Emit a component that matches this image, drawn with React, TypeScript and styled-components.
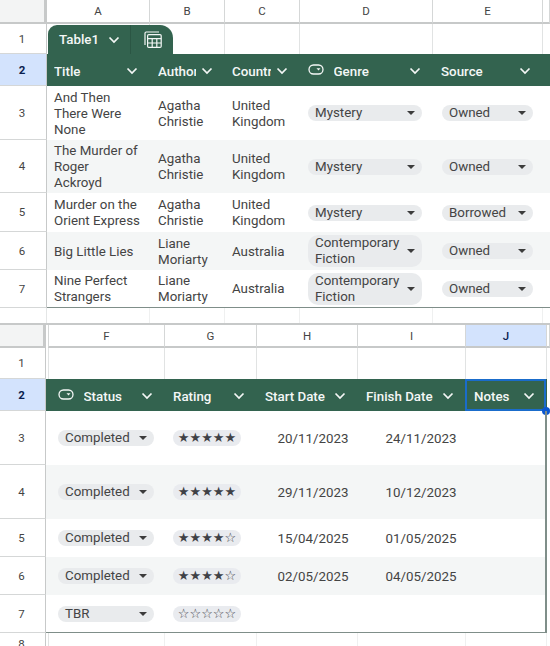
import React from "react"
import styled, {createGlobalStyle} from "styled-components"

const GREEN = "#33634f"
const LINE = "#e1e3e3"
const HEAD_LINE = "#c7c9c9"
const EDGE = "#7f8e89"
const INK = "#444"

const Global = createGlobalStyle`
  html, body {
    margin: 0;
    width: 550px;
    height: 646px;
    overflow: hidden;
    background: #fff;
    font-family: Roboto, "Liberation Sans", sans-serif;
  }
`

const Sheet = styled.div<{$cols: string; $rows: string; $top?: boolean}>`
  position: relative;
  display: grid;
  grid-template-columns: ${(p) => p.$cols};
  grid-template-rows: ${(p) => p.$rows};
  border-top: ${(p) => (p.$top ? `2px solid ${HEAD_LINE}` : "none")};
`

const Row = styled.div<{$band?: boolean; $last?: boolean}>`
  display: contents;

  & > * {
    min-width: 0;
    overflow: hidden;
  }

  & > .body {
    background: ${(p) => (p.$band ? "#f4f6f6" : "#fff")};
    border-bottom: ${(p) => (p.$last ? `1.5px solid ${EDGE}` : "none")};
  }
`

const Corner = styled.div`
  background: #f3f4f4;
  border-right: 3px solid ${HEAD_LINE};
  border-bottom: 2px solid ${HEAD_LINE};
`

const ColHead = styled.div<{$active?: boolean; $lead?: boolean}>`
  display: flex;
  align-items: center;
  justify-content: center;
  font-size: 11.5px;
  color: ${(p) => (p.$active ? "#0b1f50" : "#444")};
  font-weight: ${(p) => (p.$active ? 500 : 400)};
  background: ${(p) => (p.$active ? "#d3e3fd" : "#fff")};
  border-right: 1px solid #d5d7d7;
  border-bottom: 2px solid ${HEAD_LINE};
  border-left: ${(p) => (p.$lead ? "1px solid #d5d7d7" : "none")};
  margin-left: ${(p) => (p.$lead ? "2px" : "0")};
`

const RowHead = styled.div<{$active?: boolean}>`
  display: flex;
  align-items: center;
  justify-content: center;
  padding-right: 2px;
  font-size: 11.5px;
  color: ${(p) => (p.$active ? "#0b1f50" : "#444")};
  font-weight: ${(p) => (p.$active ? 700 : 400)};
  background: ${(p) => (p.$active ? "#d3e3fd" : "#fff")};
  border-right: 1px solid ${HEAD_LINE};
  border-bottom: 1px solid #d5d7d7;
`

const GutterGap = styled.div`
  border-right: 1px solid #e4e6e6;
`

const Blank = styled.div<{$lead?: boolean; $faint?: boolean}>`
  border-right: 1px solid ${(p) => (p.$faint ? "#eff0f0" : LINE)};
  border-left: ${(p) => (p.$lead ? `1px solid ${LINE}` : "none")};
  margin-left: ${(p) => (p.$lead ? "2px" : "0")};
`

const HeadCell = styled.div<{$pad: number}>`
  display: flex;
  align-items: center;
  padding: 2px 12px 0 ${(p) => p.$pad}px;
  background: ${GREEN};
  color: #f4f7f6;
  font-size: 13.33px;
  font-weight: 500;
  white-space: nowrap;
`

const HeadLabel = styled.span`
  flex: 1;
  min-width: 0;
  overflow: hidden;
  margin-right: 5px;
`

const PillIcon = styled.svg`
  flex: none;
  width: 16px;
  height: 11px;
  margin-right: 9.5px;
  margin-top: -3px;
`

const Chevron = styled.svg`
  flex: none;
  width: 12px;
  height: 8px;
`

const TextCell = styled.div<{$pad: number}>`
  display: flex;
  align-items: center;
  padding: 1px 7px 0 ${(p) => p.$pad}px;
  font-size: 13.33px;
  line-height: 16px;
  color: ${INK};
  white-space: pre-line;
`

const DateCell = styled.div`
  display: flex;
  align-items: center;
  justify-content: flex-end;
  padding-right: 9.5px;
  font-size: 13.33px;
  color: ${INK};
`

const ChipCell = styled.div<{$pad: number; $end: number}>`
  display: flex;
  align-items: center;
  padding: 0 ${(p) => p.$end}px 0 ${(p) => p.$pad}px;
`

const Chip = styled.div<{$tall?: boolean}>`
  flex: 1;
  min-width: 0;
  display: flex;
  align-items: center;
  gap: 4px;
  min-height: 16px;
  padding: 0 7px;
  border-radius: ${(p) => (p.$tall ? "10px" : "8px")};
  background: #e9ebed;
  font-size: 13.33px;
  line-height: 16px;
  color: ${INK};
`

const ChipText = styled.span`
  flex: 1;
  min-width: 0;
`

const Caret = styled.span`
  flex: none;
  width: 0;
  height: 0;
  border-left: 4px solid transparent;
  border-right: 4px solid transparent;
  border-top: 4px solid #3c3c3c;
`

const Stars = styled.div`
  flex: 1;
  display: flex;
  justify-content: center;
  height: 16px;
  border-radius: 8px;
  background: #e9ebef;
  font-family: "DejaVu Sans", sans-serif;
  font-size: 13px;
  line-height: 16px;
  color: #3f4146;
`

const Tab = styled.div`
  position: absolute;
  top: 25px;
  left: 48px;
  width: 125px;
  height: 29px;
  display: flex;
  align-items: center;
  background: ${GREEN};
  border-radius: 9px 13px 0 0;
  color: #f4f7f6;
  font-size: 13.33px;
  font-weight: 500;
`

const TabName = styled.div`
  display: flex;
  align-items: center;
  justify-content: space-between;
  width: 83px;
  height: 100%;
  padding: 0 10px 0 11px;
  box-sizing: border-box;
  border-right: 1px solid #2b5644;
`

const TabIcon = styled.svg`
  width: 18px;
  height: 17px;
  margin-left: 13px;
`

const Selection = styled.div`
  position: absolute;
  left: 465px;
  top: 54px;
  width: 81px;
  height: 32px;
  box-sizing: border-box;
  border: 2px solid #1a6ccb;
`

const Handle = styled.div`
  position: absolute;
  left: 542px;
  top: 82px;
  width: 8px;
  height: 8px;
  border-radius: 50%;
  background: #0b57d0;
`

const TableEdge = styled.div`
  position: absolute;
  left: 545px;
  top: 86px;
  width: 1.5px;
  height: 222px;
  background: ${EDGE};
`

const chevron = (
  <Chevron viewBox="0 0 12 8">
    <path d="M1.5 1.5 6 6l4.5-4.5" fill="none" stroke="#f4f7f6" strokeWidth="1.7" />
  </Chevron>
)

const pill = (
  <PillIcon viewBox="0 0 16 11">
    <rect x="1" y="1" width="14" height="9" rx="4.5" fill="none" stroke="#f4f7f6" strokeWidth="1.3" />
    <path d="M8.5 4.2h4L10.5 6.4z" fill="#f4f7f6" />
  </PillIcon>
)

type Value = {text: string} | {chip: string; tall?: boolean} | {stars: string} | {date: string}

type Col = {name: string; width: number; label: string; pad: number; chipPad?: number; end?: number; pill?: boolean}

const topCols: Col[] = [
  {name: "A", width: 103, label: "Title", pad: 7},
  {name: "B", width: 75, label: "Author", pad: 8},
  {name: "C", width: 75, label: "Country", pad: 7},
  {name: "D", width: 133, label: "Genre", pad: 8, chipPad: 8, end: 11, pill: true},
  {name: "E", width: 110, label: "Source", pad: 8, chipPad: 9, end: 10},
]

const bottomCols: Col[] = [
  {name: "F", width: 119, label: "Status", pad: 12, chipPad: 12, end: 11, pill: true},
  {name: "G", width: 92, label: "Rating", pad: 8, chipPad: 8, end: 16},
  {name: "H", width: 101, label: "Start Date", pad: 8},
  {name: "I", width: 108, label: "Finish Date", pad: 8},
  {name: "J", width: 81, label: "Notes", pad: 8},
]

const book = (title: string, author: string, country: string, genre: string, source: string): Value[] => [
  {text: title},
  {text: author},
  {text: country},
  {chip: genre, tall: genre.length > 12},
  {chip: source},
]

const log = (status: string, rating: string, start: string, finish: string): Value[] => [
  {chip: status},
  {stars: rating},
  {date: start},
  {date: finish},
  {text: ""},
]

const topRows: Value[][] = [
  book("And Then There Were None", "Agatha Christie", "United Kingdom", "Mystery", "Owned"),
  book("The Murder of\nRoger\nAckroyd", "Agatha Christie", "United Kingdom", "Mystery", "Owned"),
  book("Murder on the Orient Express", "Agatha Christie", "United Kingdom", "Mystery", "Borrowed"),
  book("Big Little Lies", "Liane Moriarty", "Australia", "Contemporary Fiction", "Owned"),
  book("Nine Perfect Strangers", "Liane Moriarty", "Australia", "Contemporary Fiction", "Owned"),
]

const bottomRows: Value[][] = [
  log("Completed", "★★★★★", "20/11/2023", "24/11/2023"),
  log("Completed", "★★★★★", "29/11/2023", "10/12/2023"),
  log("Completed", "★★★★☆", "15/04/2025", "01/05/2025"),
  log("Completed", "★★★★☆", "02/05/2025", "04/05/2025"),
  log("TBR", "☆☆☆☆☆", "", ""),
]

function renderValue(value: Value, col: Col, key: number) {
  if ("chip" in value) {
    return (
      <ChipCell className="body" key={key} $pad={col.chipPad ?? col.pad} $end={col.end ?? 10}>
        <Chip $tall={value.tall}>
          <ChipText>{value.chip}</ChipText>
          <Caret />
        </Chip>
      </ChipCell>
    )
  }
  if ("stars" in value) {
    return (
      <ChipCell className="body" key={key} $pad={col.chipPad ?? col.pad} $end={col.end ?? 10}>
        <Stars>{value.stars}</Stars>
      </ChipCell>
    )
  }
  if ("date" in value) {
    return (
      <DateCell className="body" key={key}>
        {value.date}
      </DateCell>
    )
  }
  return (
    <TextCell className="body" key={key} $pad={col.pad}>
      {value.text}
    </TextCell>
  )
}

type GridProps = {
  cols: Col[]
  rows: Value[][]
  gutter: number
  tail: number
  rowSizes: string
  second?: boolean
  children?: React.ReactNode
}

function Grid({cols, rows, gutter, tail, rowSizes, second, children}: GridProps) {
  const template = [gutter, ...cols.map((c) => c.width), tail].map((n) => `${n}px`).join(" ")
  const blanks = (faint?: boolean) => (
    <>
      {cols.map((c, i) => (
        <Blank key={c.name} $lead={second && i === 0} $faint={faint} />
      ))}
      <div />
    </>
  )

  return (
    <Sheet $cols={template} $rows={rowSizes} $top={second}>
      <Row>
        <Corner />
        {cols.map((c, i) => (
          <ColHead key={c.name} $active={c.name === "J"} $lead={second && i === 0}>
            {c.name}
          </ColHead>
        ))}
        <ColHead />
      </Row>
      <Row>
        <RowHead>1</RowHead>
        {blanks()}
      </Row>
      <Row>
        <RowHead $active>2</RowHead>
        {cols.map((c) => (
          <HeadCell key={c.name} $pad={c.pad}>
            {c.pill && pill}
            <HeadLabel>{c.label}</HeadLabel>
            {chevron}
          </HeadCell>
        ))}
        {second ? <div /> : <HeadCell $pad={0} />}
      </Row>
      {rows.map((row, r) => (
        <Row key={r} $band={r % 2 === 1} $last={r === rows.length - 1}>
          <RowHead>{r + 3}</RowHead>
          {row.map((value, i) => renderValue(value, cols[i], i))}
          {second ? <div /> : <div className="body" />}
        </Row>
      ))}
      <Row>
        {second ? <RowHead>8</RowHead> : <GutterGap />}
        {blanks(true)}
      </Row>
      {children}
    </Sheet>
  )
}

export default function App() {
  return (
    <>
      <Global />
      <Grid
        cols={topCols}
        rows={topRows}
        gutter={47}
        tail={7}
        rowSizes="24px 30px 32px 54px 53px 39px 38px 38px 15px"
      >
        <Tab>
          <TabName>
            Table1
            {chevron}
          </TabName>
          <TabIcon viewBox="0 0 18 17" fill="none" stroke="#f4f7f6" strokeWidth="1.2">
            <path d="M1 14V2.2C1 1.5 1.5 1 2.2 1H15" />
            <rect x="3.6" y="3.6" width="13.6" height="12.8" rx="1.2" />
            <path d="M3.6 7.6h13.6M3.6 12h13.6M8.2 7.6v8.8M12.8 7.6v8.8" />
          </TabIcon>
        </Tab>
      </Grid>
      <Grid
        second
        cols={bottomCols}
        rows={bottomRows}
        gutter={46}
        tail={3}
        rowSizes="23px 31px 32px 54px 54px 38px 38px 38px 22px"
      >
        <Selection />
        <Handle />
        <TableEdge />
      </Grid>
    </>
  )
}
